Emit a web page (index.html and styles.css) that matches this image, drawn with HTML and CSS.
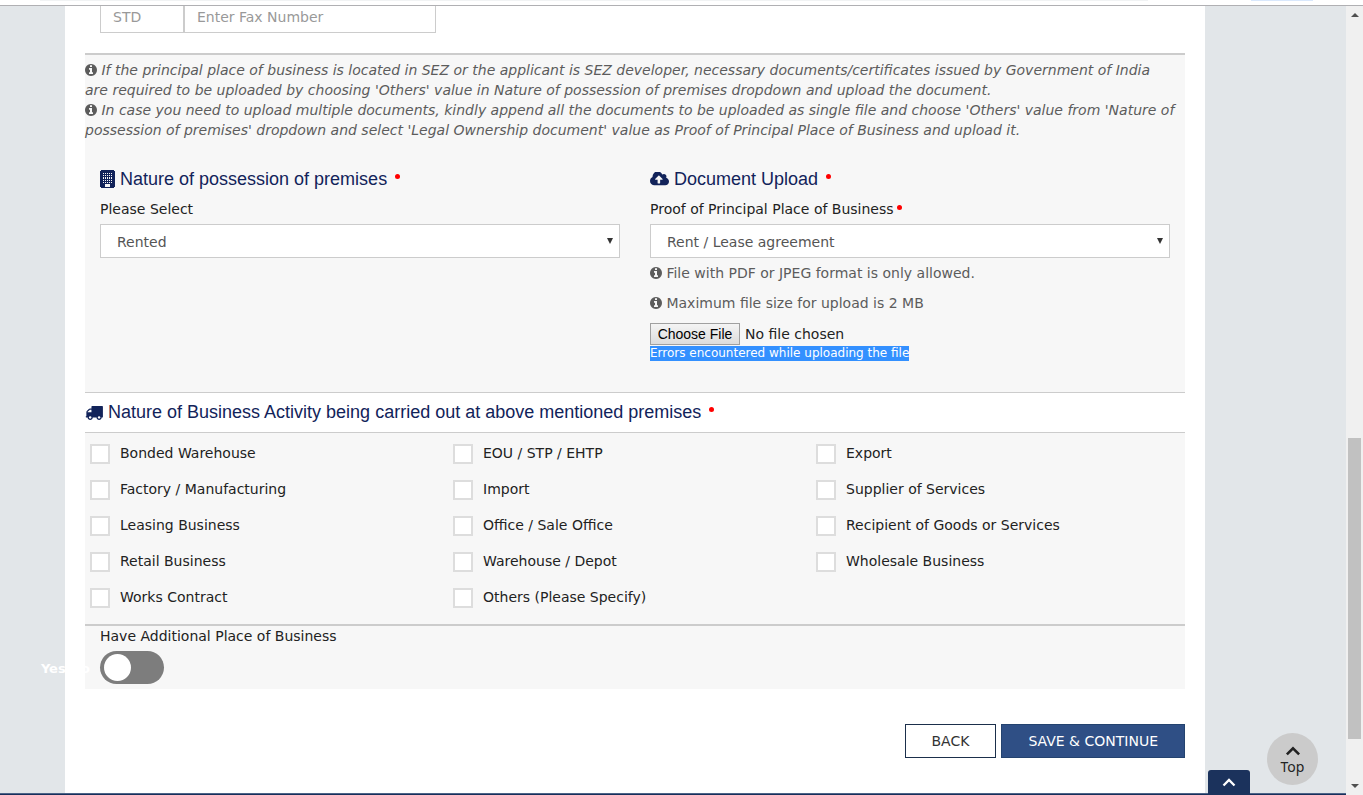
FILE: index.html
```html
<!DOCTYPE html>
<html lang="en">
<head>
    <meta charset="UTF-8">
    <meta name="viewport" content="width=device-width, initial-scale=1.0">
    <title>Principal Place of Business</title>
    <link rel="stylesheet" href="styles.css">
</head>
<body>
    <svg class="sprite" aria-hidden="true">
        <symbol id="info" viewBox="128 128 1536 1536">
            <path d="M1152 1376v-160q0-14-9-23t-23-9h-96v-512q0-14-9-23t-23-9h-320q-14 0-23 9t-9 23v160q0 14 9 23t23 9h96v320h-96q-14 0-23 9t-9 23v160q0 14 9 23t23 9h448q14 0 23-9t9-23zM1024 480v-160q0-14-9-23t-23-9h-192q-14 0-23 9t-9 23v160q0 14 9 23t23 9h192q14 0 23-9t9-23zM1664 896q0 209-103 385.5t-279.5 279.5-385.5 103-385.5-103-279.5-279.5-103-385.5 103-385.5 279.5-279.5 385.5-103 385.5 103 279.5 279.5 103 385.5z"/>
        </symbol>
        <symbol id="building" viewBox="0 0 15 18">
            <path fill-rule="evenodd" d="M1 0h13v1h1v16h-1v1H1v-1H0V1h1zM3 3v1h1V3zM5 3v1h1V3zM7 3v1h1V3zM9 3v1h1V3zM11 3v1h1V3zM3 5v1h1V5zM5 5v1h1V5zM7 5v1h1V5zM9 5v1h1V5zM11 5v1h1V5zM3 7v2h1V7zM5 7v2h1V7zM7 7v2h1V7zM9 7v2h1V7zM11 7v2h1V7zM3 10v1h1v-1zM5 10v1h1v-1zM7 10v1h1v-1zM9 10v1h1v-1zM11 10v1h1v-1zM3 12v1h1v-1zM5 12v1h1v-1zM7 12v1h1v-1zM9 12v1h1v-1zM11 12v1h1v-1zM5 14v3h5v-3z"/>
        </symbol>
        <symbol id="upload" viewBox="0 256 1920 1280">
            <path d="M1280 928q0-14-9-23l-352-352q-9-9-23-9t-23 9l-351 351q-10 12-10 24 0 14 9 23t23 9h224v352q0 13 9.5 22.5t22.5 9.5h192q13 0 22.5-9.5t9.5-22.5v-352h224q13 0 22.5-9.5t9.5-22.5zM1920 1152q0 159-112.5 271.5t-271.5 112.5h-1088q-185 0-316.5-131.5t-131.5-316.5q0-130 70-240t188-165q-2-30-2-43 0-212 150-362t362-150q156 0 285.5 87t188.5 231q71-62 166-62 106 0 181 75t75 181q0 76-41 138 130 31 213.5 135.5t83.5 238.5z"/>
        </symbol>
        <!-- truck faces left -->
        <symbol id="truck" viewBox="0 256 1792 1408">
            <path d="M640 1408q0-52-38-90t-90-38-90 38-38 90 38 90 90 38 90-38 38-90zM256 896h384v-256h-158q-13 0-22 9l-195 195q-9 9-9 22v30zM1536 1408q0-52-38-90t-90-38-90 38-38 90 38 90 90 38 90-38 38-90zM1792 320v1024q0 15-4 26.5t-13.5 18.5-16.5 11.5-23.5 6-22.5 2-25.5 0-22.5-.5q0 106-75 181t-181 75-181-75-75-181h-384q0 106-75 181t-181 75-181-75-75-181h-64q-3 0-22.5.5t-25.5 0-22.5-2-23.5-6-16.5-11.5-13.5-18.5-4-26.5q0-26 19-45t45-19v-320q0-8-.5-35t0-38 2.5-34.5 6.5-37 14-30.5 22.5-30l198-198q19-19 50.5-32t58.5-13h160v-192q0-26 19-45t45-19h1024q26 0 45 19t19 45z"/>
        </symbol>
        <symbol id="chevron" viewBox="0 0 14 9">
            <path d="M1.5 7.5L7 2l5.500 5.500" fill="none" stroke="currentColor" stroke-width="2.300"/>
        </symbol>
    </svg>

    <div class="browser-edge"><span class="edge-bar"></span><span class="edge-tab"></span></div>

    <div class="viewport">
        <div class="page">
            <main class="content">
                <div class="fax-row">
                    <input class="form-control std" type="text" placeholder="STD" aria-label="STD code">
                    <input class="form-control fax" type="text" placeholder="Enter Fax Number" aria-label="Fax number">
                </div>

                <section class="panel premises">
                    <div class="notes">
                        <p><svg class="info"><use href="#info"/></svg> If the principal place of business is located in SEZ or the applicant is SEZ developer, necessary documents/certificates issued by Government of India are required to be uploaded by choosing 'Others' value in Nature of possession of premises dropdown and upload the document.</p>
                        <p><svg class="info"><use href="#info"/></svg> In case you need to upload multiple documents, kindly append all the documents to be uploaded as single file and choose 'Others' value from 'Nature of possession of premises' dropdown and select 'Legal Ownership document' value as Proof of Principal Place of Business and upload it.</p>
                    </div>
                    <div class="row">
                        <div class="col">
                            <h4><svg class="ico-building"><use href="#building"/></svg> Nature of possession of premises <i class="req"></i></h4>
                            <label for="possession">Please Select</label>
                            <div class="select">
                                <select id="possession" class="form-control"><option>Rented</option></select>
                            </div>
                        </div>
                        <div class="col">
                            <h4><svg class="ico-upload"><use href="#upload"/></svg> Document Upload <i class="req"></i></h4>
                            <label for="proof">Proof of Principal Place of Business<i class="req tight"></i></label>
                            <div class="select">
                                <select id="proof" class="form-control"><option>Rent / Lease agreement</option></select>
                            </div>
                            <p class="help"><svg class="info"><use href="#info"/></svg> File with PDF or JPEG format is only allowed.</p>
                            <p class="help"><svg class="info"><use href="#info"/></svg> Maximum file size for upload is 2 MB</p>
                            <input class="file" type="file" aria-label="Proof of Principal Place of Business">
                            <p class="err"><span>Errors encountered while uploading the file</span></p>
                        </div>
                    </div>
                </section>

                <h4 class="activity-title"><svg class="ico-truck"><use href="#truck"/></svg> Nature of Business Activity being carried out at above mentioned premises <i class="req"></i></h4>

                <section class="panel activities">
                    <label class="check"><input type="checkbox">Bonded Warehouse</label>
                    <label class="check"><input type="checkbox">EOU / STP / EHTP</label>
                    <label class="check"><input type="checkbox">Export</label>
                    <label class="check"><input type="checkbox">Factory / Manufacturing</label>
                    <label class="check"><input type="checkbox">Import</label>
                    <label class="check"><input type="checkbox">Supplier of Services</label>
                    <label class="check"><input type="checkbox">Leasing Business</label>
                    <label class="check"><input type="checkbox">Office / Sale Office</label>
                    <label class="check"><input type="checkbox">Recipient of Goods or Services</label>
                    <label class="check"><input type="checkbox">Retail Business</label>
                    <label class="check"><input type="checkbox">Warehouse / Depot</label>
                    <label class="check"><input type="checkbox">Wholesale Business</label>
                    <label class="check"><input type="checkbox">Works Contract</label>
                    <label class="check"><input type="checkbox">Others (Please Specify)</label>
                </section>

                <section class="panel additional">
                    <label for="additional">Have Additional Place of Business</label>
                    <div class="switch">
                        <span class="switch-text">Yes No</span>
                        <input id="additional" type="checkbox">
                    </div>
                </section>

                <div class="actions">
                    <button class="btn btn-default" type="button">BACK</button>
                    <button class="btn btn-primary" type="submit">SAVE &amp; CONTINUE</button>
                </div>
            </main>
            <footer class="footer"></footer>
            <button class="footer-toggle" type="button" aria-label="Show footer"><svg><use href="#chevron"/></svg></button>
            <a class="to-top" href="#"><svg><use href="#chevron"/></svg>Top</a>
        </div>

        <div class="scrollbar">
            <span class="arrow up"></span>
            <span class="track"></span>
            <span class="thumb"></span>
            <span class="track end"></span>
            <span class="arrow down"></span>
        </div>
    </div>
</body>
</html>
```

FILE: styles.css
```css
* {
    box-sizing: border-box;
}
body {
    margin: 0;
    height: 100vh;
    display: flex;
    flex-direction: column;
    overflow: hidden;
    font-family: "DejaVu Sans", Verdana, sans-serif;
    font-size: 14px;
    line-height: 20px;
    color: #222;
    background: #fff;
}
p, h4 {
    margin: 0;
}
.sprite {
    position: absolute;
    width: 0;
    height: 0;
}
svg {
    fill: currentColor;
}

/* lower edge of the browser toolbar */
.browser-edge {
    height: 6px;
    flex: none;
    display: flex;
    padding: 0 50px 0 40px;
    justify-content: space-between;
    border-bottom: 1px solid #b0b0b3;
    background: #fff;
}
.edge-bar {
    width: 1108px;
    height: 1px;
    background: #f1f3f4;
}
.edge-tab {
    width: 62px;
    height: 1px;
    background: #d9e8fc;
}
.viewport {
    flex: 1;
    min-height: 0;
    display: flex;
}
.page {
    position: relative;
    flex: 1;
    min-width: 0;
    display: flex;
    flex-direction: column;
    overflow: hidden;
    background: #e2e6e9;
}
.content {
    flex: 1;
    min-height: 0;
    margin: 0 141px 0 65px;
    padding: 0 20px;
    background: #fff;
}

/* form fields */
.form-control {
    height: 34px;
    padding: 2px 12px 0;
    border: 1px solid #ccc;
    border-radius: 0;
    background: #fff;
    color: #555;
    font: inherit;
}
.form-control::placeholder {
    color: #999;
}
.fax-row {
    display: flex;
    margin: -7px 0 20px 15px;
}
.std {
    width: 84px;
}
.fax {
    width: 252px;
}
.select {
    position: relative;
}
.select select {
    display: block;
    width: 100%;
    padding: 2px 16px 0;
    appearance: none;
}
.select::after {
    content: "";
    position: absolute;
    right: 7px;
    top: 14px;
    border: 3px solid transparent;
    border-top: 6px solid #333;
    border-bottom: 0;
    pointer-events: none;
}
.file {
    display: block;
    height: 22px;
    margin-top: 5px;
    font: inherit;
    line-height: 22px;
}
.file::file-selector-button {
    width: 90px;
    height: 22px;
    margin: 0 5px 0 0;
    padding: 0;
    border: 1px solid #a0a0a0;
    border-radius: 0;
    background: linear-gradient(#f4f4f4, #dcdcdc);
    color: #000;
    font: 14px "Liberation Sans", Arial, sans-serif;
}

.panel {
    background: #f7f7f7;
}
.premises {
    padding: 5px 0 31px;
    border-top: 2px solid #ccc;
}
.notes {
    padding-right: 9px;
    color: #5c5c5c;
    font-style: italic;
}
.info {
    width: 12px;
    height: 12px;
    vertical-align: -1px;
}
.row {
    display: flex;
    margin-top: 29px;
}
.col {
    flex: 1;
    padding: 0 15px;
}
h4 {
    font: 18px/20px "Liberation Sans", Arial, sans-serif;
    color: #12235a;
}
.col label {
    display: block;
    margin: 10px 0 5px;
}
.req {
    display: inline-block;
    width: 5px;
    height: 5px;
    margin-left: 3px;
    border-radius: 50%;
    background: #f00;
    vertical-align: 6px;
}
.req.tight {
    vertical-align: 4px;
}
.ico-building {
    width: 15px;
    height: 18px;
    vertical-align: -3px;
}
.ico-upload {
    width: 19px;
    height: 14px;
    vertical-align: -1px;
}
.ico-truck {
    width: 18px;
    height: 14px;
    vertical-align: -2px;
}
.help {
    margin: 5px 0 10px;
    color: #5c5c5c;
}
.err {
    height: 16px;
    padding-top: 1px;
    font-size: 12px;
    line-height: 15px;
    color: #fff;
}
.err span {
    display: inline-block;
    background: #3390ff;
}

.activity-title {
    padding: 9px 0 10px;
    border: 1px solid #ccc;
    border-width: 1px 0;
}
.activities {
    display: grid;
    grid-template-columns: repeat(3, 1fr);
    row-gap: 16px;
    padding: 11px 6px 16px 5px;
}
.check {
    display: flex;
    align-items: flex-start;
    gap: 10px;
    line-height: 18px;
}
.check input {
    width: 20px;
    height: 20px;
    margin: 0;
    border: 2px solid #ddd;
    background: #fff;
    appearance: none;
}
.check input:checked {
    background: #12235a;
}

.additional {
    padding: 0 15px 5px;
    border-top: 2px solid #ccc;
}
.switch {
    position: relative;
    margin-top: 5px;
}
.switch input {
    display: block;
    width: 64px;
    height: 33px;
    margin: 0;
    padding: 3px 4px;
    border-radius: 17px;
    background: #7d7d7d;
    appearance: none;
}
.switch input::before {
    content: "";
    display: block;
    width: 27px;
    height: 27px;
    border-radius: 50%;
    background: #fff;
}
.switch-text {
    position: absolute;
    right: 100%;
    top: 8px;
    margin-right: 10px;
    color: #fff;
    font-size: 13px;
    font-weight: bold;
    white-space: nowrap;
}

.actions {
    display: flex;
    justify-content: flex-end;
    gap: 5px;
    margin-top: 35px;
}
.btn {
    height: 34px;
    padding: 0 26px;
    border: 1px solid #1b2f4b;
    font: inherit;
}
.btn-default {
    background: #fff;
    color: #333;
}
.btn-primary {
    border-color: #24436f;
    background: #2f4f85;
    color: #fff;
}

.footer {
    height: 2px;
    border-top: 1px solid #4d6488;
    background: #17305b;
}
.footer-toggle {
    position: absolute;
    right: 96px;
    bottom: 0;
    width: 42px;
    height: 25px;
    padding: 0;
    border: 0;
    border-radius: 3px 3px 0 0;
    background: #1b325c;
    color: #fff;
}
.footer-toggle svg {
    width: 14px;
    height: 9px;
}
.to-top {
    position: absolute;
    right: 28px;
    bottom: 10px;
    width: 51px;
    height: 52px;
    display: flex;
    flex-direction: column;
    align-items: center;
    padding-top: 13px;
    border-radius: 50%;
    background: #cbcbcb;
    color: #222;
    font-family: "Noto Sans", Tahoma, sans-serif;
    font-size: 14px;
    line-height: 22px;
    text-decoration: none;
}
.to-top svg {
    width: 16px;
    height: 10px;
    flex: none;
}

/* scroll bar */
.scrollbar {
    width: 17px;
    display: flex;
    flex-direction: column;
    align-items: center;
    padding: 7px 0;
    background: #f0f0f0;
}
.arrow {
    border: 4px solid transparent;
}
.arrow.up {
    border-top: 0;
    border-bottom-color: #505050;
}
.arrow.down {
    border-bottom: 0;
    border-top-color: #505050;
}
.track {
    flex: 420;
}
.track.end {
    flex: 45;
}
.thumb {
    flex: 301;
    width: 13px;
    background: #c1c1c1;
}
```
